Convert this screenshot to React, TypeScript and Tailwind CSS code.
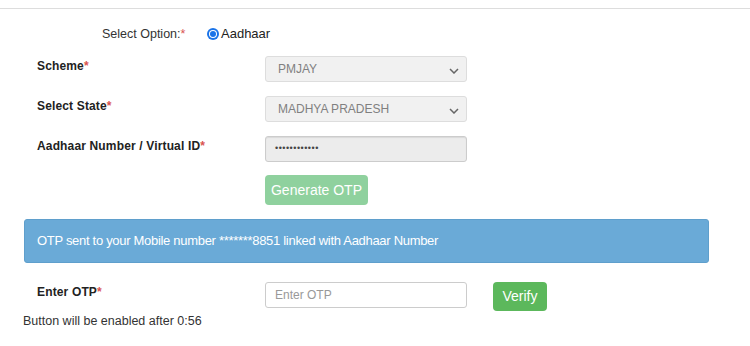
import React from "react"

function Req() {
  return <span className="text-[#d9534f]">*</span>
}

function Chevron() {
  return (
    <svg width="10" height="6" viewBox="0 0 10 6" className="absolute right-[7px] top-[11px]">
      <path d="M1 1l4 4 4-4" fill="none" stroke="#666" strokeWidth="1.5" />
    </svg>
  )
}

function Row({ label, children }: { label: React.ReactNode; children: React.ReactNode }) {
  return (
    <div className="flex items-start">
      <div className="w-[265px] pl-[37px] pt-[1px] text-[12px] font-bold text-[#222] leading-[18px] tracking-[0.15px]">{label}</div>
      {children}
    </div>
  )
}

export default function App() {
  return (
    <div className="w-[750px] h-[346px] bg-white font-['Liberation_Sans',Arial,sans-serif] text-[#333] overflow-hidden">
      <div className="h-[8px]" />
      <div className="border-t border-[#ddd]" />

      <div className="flex items-center mt-[16px] h-[18px]">
        <div className="pl-[102px] w-[207px] text-[12.5px]">
          Select Option:<Req />
        </div>
        <label className="flex items-center gap-[2px] text-[13px] text-[#222]">
          <span className="w-[12px] h-[12px] rounded-full bg-[#1a73e8] flex items-center justify-center">
            <span className="w-[8px] h-[8px] rounded-full bg-white flex items-center justify-center">
              <span className="w-[6px] h-[6px] rounded-full bg-[#1a73e8]" />
            </span>
          </span>
          Aadhaar
        </label>
      </div>

      <div className="mt-[13px] flex flex-col gap-[14px]">
        <Row label={<>Scheme<Req /></>}>
          <div className="relative w-[202px] h-[26px] rounded-[3px] border border-[#ddd] bg-[#f1f1f1] pl-[12px] text-[12px] leading-[24px] text-[#808080]">
            PMJAY
            <Chevron />
          </div>
        </Row>
        <Row label={<>Select State<Req /></>}>
          <div className="relative w-[202px] h-[26px] rounded-[3px] border border-[#ddd] bg-[#f1f1f1] pl-[12px] text-[12px] leading-[24px] text-[#808080]">
            MADHYA PRADESH
            <Chevron />
          </div>
        </Row>
        <Row label={<>Aadhaar Number / Virtual ID<Req /></>}>
          <div className="w-[202px] h-[26px] rounded-[3px] border border-[#ccc] bg-[#ececec] pl-[9px] text-[9px] leading-[22px] text-[#444] tracking-[0.5px] shadow-[inset_0_1px_1px_rgba(0,0,0,0.08)]">
            ••••••••••••
          </div>
        </Row>
      </div>

      <div className="pl-[265px] mt-[13px]">
        <button className="w-[103px] h-[30px] rounded-[4px] bg-[#8fd19e] text-white text-[14px]">Generate OTP</button>
      </div>

      <div className="mx-[24px] w-[685px] mt-[14px] h-[44px] rounded-[3px] bg-[#6aaad7] border border-[#5f9fcc] text-white text-[13px] pl-[12px] flex items-center tracking-[-0.3px]">
        OTP sent to your Mobile number *******8851 linked with Aadhaar Number
      </div>

      <div className="flex items-start mt-[19px]">
        <div className="w-[265px] pl-[37px] pt-[1px] text-[12px] font-bold text-[#222] leading-[18px] tracking-[0.15px]">
          Enter OTP<Req />
        </div>
        <div className="w-[202px] h-[26px] rounded-[3px] border border-[#ccc] bg-white pl-[9px] text-[12px] leading-[24px] text-[#999]">
          Enter OTP
        </div>
        <button className="ml-[26px] w-[54px] h-[29px] rounded-[4px] bg-[#5cb85c] text-white text-[14px]">Verify</button>
      </div>

      <div className="pl-[23px] mt-[1px] text-[12.5px] text-[#333]">Button will be enabled after 0:56</div>
    </div>
  )
}
